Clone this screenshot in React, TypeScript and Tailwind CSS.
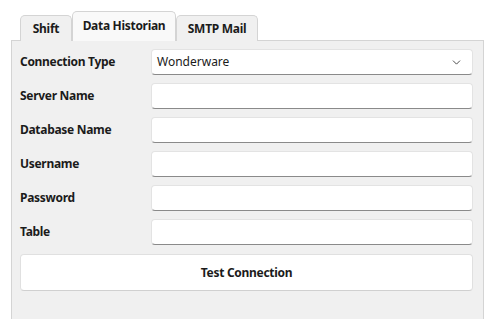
import { ChevronDown } from "lucide-react";

const fields = ["Server Name", "Database Name", "Username", "Password", "Table"];

function Row({ label, children }: { label: string; children: React.ReactNode }) {
  return (
    <div className="flex h-[26px] items-center">
      <span className="w-[131px] shrink-0 text-[12px] font-bold tracking-[-0.3px] text-[#1b1b1b]">{label}</span>
      {children}
    </div>
  );
}

export default function App() {
  return (
    <div
      className="flex h-[319px] w-[498px] flex-col bg-white pl-[11px] pr-[14px] pt-[11px]"
      style={{ fontFamily: '"Noto Sans", "Open Sans", sans-serif' }}
    >
      <div className="relative z-10 flex items-end pl-[9px] text-[12px] font-bold tracking-[-0.3px] text-[#1b1b1b]">
        <div className="-mb-px flex h-[26px] w-[52px] items-center justify-center rounded-t-[5px] border border-b-0 border-[#d4d4d4] bg-[#f0f0f0]">
          Shift
        </div>
        <div className="-mb-px flex h-[30px] w-[104px] items-center justify-center rounded-t-[5px] border border-b-0 border-[#d4d4d4] bg-[#f9f9f9] pb-[2px]">
          Data Historian
        </div>
        <div className="-mb-px flex h-[26px] w-[82px] items-center justify-center rounded-t-[5px] border border-b-0 border-[#d4d4d4] bg-[#f0f0f0]">
          SMTP Mail
        </div>
      </div>
      <div className="flex flex-1 flex-col gap-[8px] border border-b-0 border-[#d4d4d4] bg-[#f0f0f0] pl-[8px] pr-[10px] pt-[8px]">
        <Row label="Connection Type">
          <div className="flex h-[26px] flex-1 items-center justify-between rounded-[4px] border border-[#e3e3e3] border-b-[#8a8a8a] bg-white pl-[5px] pr-[9px] text-[12px] text-[#1b1b1b]">
            <span>Wonderware</span>
            <ChevronDown size={13} strokeWidth={1.6} className="text-[#333]" />
          </div>
        </Row>
        {fields.map((f) => (
          <Row key={f} label={f}>
            <div className="h-[26px] flex-1 rounded-[4px] border border-[#e3e3e3] border-b-[#8a8a8a] bg-white" />
          </Row>
        ))}
        <div className="mt-[1px] flex h-[37px] items-center justify-center rounded-[4px] border border-[#e0e0e0] border-b-[#d0d0d0] bg-white text-[12px] font-bold tracking-[-0.3px] text-[#1b1b1b]">
          Test Connection
        </div>
      </div>
    </div>
  );
}
